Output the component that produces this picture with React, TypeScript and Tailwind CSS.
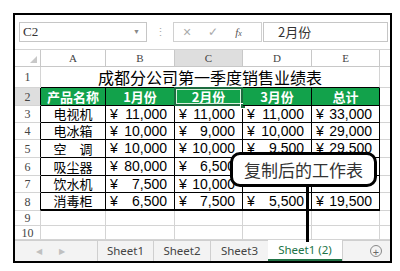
import React from "react";

const CJK = { fontFamily: '"Noto Sans CJK SC", "Noto Sans", sans-serif' };
const SERIF = { fontFamily: '"Liberation Serif", "Noto Sans CJK SC", serif' };
const SANS = { fontFamily: '"Liberation Sans", "Noto Sans CJK SC", sans-serif' };
const UI = { fontFamily: '"Noto Sans", "Liberation Sans", sans-serif' };

const rows = [
  { n: "电视机", v: ["11,000", "11,000", "11,000", "33,000"] },
  { n: "电冰箱", v: ["10,000", "9,000", "10,000", "29,000"] },
  { n: "空　调", v: ["10,000", "10,000", "9,500", "29,500"] },
  { n: "吸尘器", v: ["80,000", "6,500", "", ""] },
  { n: "饮水机", v: ["7,500", "10,000", "", ""] },
  { n: "消毒柜", v: ["6,500", "7,500", "5,500", "19,500"] },
];

function Money({ v, last }: { v: string; last: boolean }) {
  return (
    <div
      className={
        "flex items-center justify-between pl-[4px] pr-[7px] text-[14px] text-black bg-white border-r border-black " +
        (last ? "border-b-2" : "border-b")
      }
      style={SANS}
    >
      {v !== "" && (
        <>
          <span>¥</span>
          <span>{v}</span>
        </>
      )}
    </div>
  );
}

export default function App() {
  const headers = ["A", "B", "C", "D", "E"];
  return (
    <div className="relative w-[400px] h-[271px] bg-white overflow-hidden">
      <div className="absolute left-[13px] top-[13px] w-[379px] h-[250px] border-2 border-black bg-white flex flex-col">
        {/* formula bar */}
        <div className="h-[34px] flex items-start pt-[7px] bg-white">
          <div className="ml-[4px] w-[128px] h-[20px] border border-[#c6c6c6] flex items-center justify-between pl-[3px] pr-[6px]">
            <span className="text-[13px] text-[#333]" style={SERIF}>C2</span>
            <span className="text-[7px] text-[#888]">▼</span>
          </div>
          <div className="w-[26px] h-[20px] flex items-center justify-center text-[11px] text-[#aaa]">⋮</div>
          <div className="w-[89px] h-[20px] border border-[#d0d0d0] flex items-center text-[#aaa]">
            <span className="ml-[9px] text-[14px] leading-none" style={SANS}>×</span>
            <span className="ml-[17px] text-[12px] leading-none">✓</span>
            <span className="ml-[17px] text-[11px] italic text-[#555] leading-none" style={SERIF}>
              f<span className="text-[8px]">x</span>
            </span>
          </div>
          <div className="ml-px w-[125px] h-[20px] border border-[#c6c6c6] flex items-center pl-[14px]">
            <span className="text-[13px] text-[#333]" style={CJK}>2月份</span>
          </div>
        </div>

        {/* sheet grid */}
        <div className="grid grid-cols-[26px_65px_69px_68px_69px_68px_10px] grid-rows-[17px_21px_18px_17px_17px_18px_18px_17px_18px_15px_14px] border-t border-[#d4d4d4]">
          {/* header row */}
          <div className="relative bg-white border-r border-b border-[#c8c8c8]">
            <div className="absolute right-[3px] bottom-[3px] w-0 h-0 border-l-[7px] border-l-transparent border-b-[7px] border-b-[#c8c8c8]" />
          </div>
          {headers.map((h) => (
            <div
              key={h}
              className={
                "flex items-center justify-center text-[11px] text-[#444] border-r border-b border-[#c8c8c8] " +
                (h === "C" ? "bg-[#dedede]" : "bg-white")
              }
              style={SERIF}
            >
              {h}
            </div>
          ))}
          <div className="bg-white border-b border-[#c8c8c8]" />

          {/* row 1 */}
          <div className="flex items-center justify-center text-[12px] text-[#444] border-r border-b border-[#d4d4d4] bg-white" style={SERIF}>1</div>
          <div className="col-span-5 flex items-center justify-center text-[16px] text-black border-r border-[#d4d4d4] border-b border-b-black bg-white" style={CJK}>
            成都分公司第一季度销售业绩表
          </div>
          <div className="border-b border-[#d4d4d4]" />

          {/* row 2 */}
          <div className="flex items-center justify-center text-[12px] text-[#444] border-r border-b border-r-black border-b-[#d4d4d4] bg-[#dedede]" style={SERIF}>2</div>
          {["产品名称", "1月份", "2月份", "3月份", "总计"].map((t, i) => (
            <div
              key={t}
              className="relative flex items-center justify-center text-[13px] font-bold text-white bg-[#12a24b] border-r border-b border-black"
              style={CJK}
            >
              {t}
              {i === 2 && (
                <>
                  <div className="absolute -left-px -top-px -right-px -bottom-px border-2 border-[#1d6b3f]" />
                  <div className="absolute left-[1px] top-[1px] right-[1px] bottom-[1px] border border-[#d8f0de]" />
                  <div className="absolute -right-[4px] -bottom-[4px] w-[6px] h-[6px] bg-[#1d6b3f] border border-white" />
                </>
              )}
            </div>
          ))}
          <div className="border-b border-[#d4d4d4]" />

          {/* data rows */}
          {rows.map((r, ri) => {
            const last = ri === rows.length - 1;
            return (
              <React.Fragment key={r.n}>
                <div className="flex items-center justify-center text-[12px] text-[#444] border-r border-b border-r-black border-b-[#d4d4d4] bg-white" style={SERIF}>
                  {ri + 3}
                </div>
                <div
                  className={
                    "flex items-center justify-center text-[13px] text-black bg-white border-r border-black " +
                    (last ? "border-b-2" : "border-b")
                  }
                  style={CJK}
                >
                  {r.n}
                </div>
                {r.v.map((v, vi) => (
                  <Money key={vi} v={v} last={last} />
                ))}
                <div className="border-b border-[#d4d4d4]" />
              </React.Fragment>
            );
          })}

          {/* rows 9-10 */}
          {[9, 10].map((n) => (
            <React.Fragment key={n}>
              <div className="flex items-center justify-center text-[12px] text-[#444] border-r border-b border-[#d4d4d4] bg-white" style={SERIF}>
                {n}
              </div>
              <div className="border-r border-b border-[#d4d4d4]" />
              <div className="border-r border-b border-[#d4d4d4]" />
              <div className="border-r border-b border-[#d4d4d4]" />
              <div className="border-r border-b border-[#d4d4d4]" />
              <div className="border-r border-b border-[#d4d4d4]" />
              <div className="border-b border-[#d4d4d4]" />
            </React.Fragment>
          ))}
        </div>

        {/* sheet tabs */}
        <div className="flex-1 flex bg-[#f3f3f3] border-t border-[#cfcfcf] text-[11.5px] text-[#444]" style={UI}>
          <div className="w-[82px] flex items-center text-[8px] text-[#c0c0c0]">
            <span className="ml-[21px]">◀</span>
            <span className="ml-[17px]">▶</span>
          </div>
          <div className="w-[56px] border-l border-[#cfcfcf] flex items-center justify-center">Sheet1</div>
          <div className="w-[57px] border-l border-[#cfcfcf] flex items-center justify-center">Sheet2</div>
          <div className="w-[58px] border-l border-[#cfcfcf] flex items-center justify-center">Sheet3</div>
          <div className="w-[74px] -mt-px bg-white border-b-2 border-[#217346] flex items-center justify-center text-[#217346]">
            Sheet1 (2)
          </div>
          <div className="flex-1 border-l border-[#cfcfcf] flex items-center justify-end pr-[8px]">
            <div className="w-[12px] h-[12px] rounded-full border border-[#888] flex items-center justify-center text-[11px] leading-none text-[#666]">
              +
            </div>
          </div>
        </div>
      </div>

      {/* callout */}
      <div className="absolute left-[306px] top-[186px] w-[3px] h-[56px] bg-black" />
      <div
        className="absolute left-[230px] top-[152px] w-[147px] h-[35px] rounded-[10px] border-[3px] border-black bg-white flex items-center justify-center text-[17px] text-[#333]"
        style={CJK}
      >
        复制后的工作表
      </div>
    </div>
  );
}
